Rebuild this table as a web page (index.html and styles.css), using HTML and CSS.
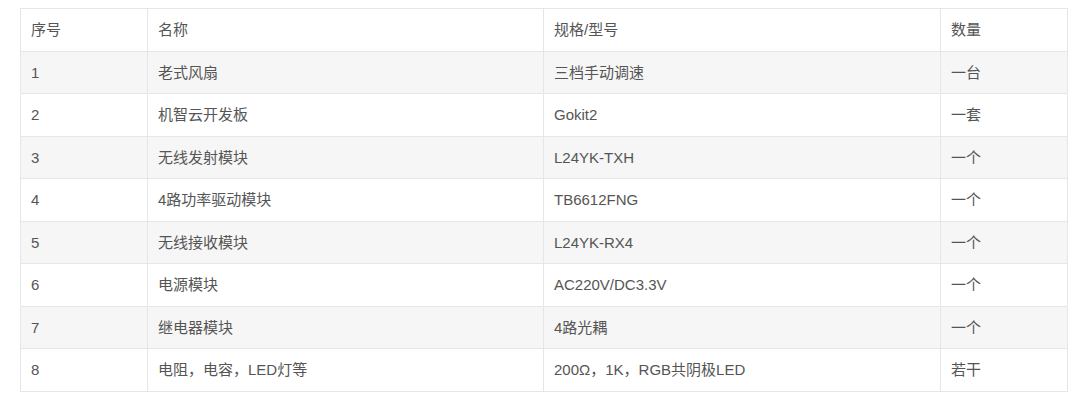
FILE: index.html
```html
<!DOCTYPE html>
<html lang="zh">
<head>
<meta charset="utf-8">
<link rel="stylesheet" href="styles.css">
</head>
<body>
<div class="wrap">
<table class="parts">
<colgroup>
<col class="c1"><col class="c2"><col class="c3"><col class="c4">
</colgroup>
<thead>
<tr><th>序号</th><th>名称</th><th>规格/型号</th><th>数量</th></tr>
</thead>
<tbody>
<tr><td>1</td><td>老式风扇</td><td>三档手动调速</td><td>一台</td></tr>
<tr><td>2</td><td>机智云开发板</td><td>Gokit2</td><td>一套</td></tr>
<tr><td>3</td><td>无线发射模块</td><td>L24YK-TXH</td><td>一个</td></tr>
<tr><td>4</td><td>4路功率驱动模块</td><td>TB6612FNG</td><td>一个</td></tr>
<tr><td>5</td><td>无线接收模块</td><td>L24YK-RX4</td><td>一个</td></tr>
<tr><td>6</td><td>电源模块</td><td>AC220V/DC3.3V</td><td>一个</td></tr>
<tr><td>7</td><td>继电器模块</td><td>4路光耦</td><td>一个</td></tr>
<tr><td>8</td><td>电阻，电容，LED灯等</td><td>200Ω，1K，RGB共阴极LED</td><td>若干</td></tr>
</tbody>
</table>
</div>
</body>
</html>
```
FILE: styles.css
```css
html, body {
  margin: 0;
  padding: 0;
  background: #ffffff;
}
body {
  font-family: "Liberation Sans", "Noto Sans CJK SC", sans-serif;
  font-size: 15px;
  color: #555555;
}
.wrap {
  padding: 8px 0 0 20px;
}
.parts {
  width: 1047px;
  border-collapse: collapse;
  table-layout: fixed;
}
.c1 { width: 127px; }
.c2 { width: 396px; }
.c3 { width: 397px; }
.c4 { width: 127px; }
.parts th,
.parts td {
  border: 1px solid #e6e6e6;
  padding: 10px 10px;
  line-height: 21.5px;
  text-align: left;
  font-weight: normal;
  white-space: nowrap;
}
.parts tbody tr:nth-child(odd) {
  background: #f6f6f6;
}
```
